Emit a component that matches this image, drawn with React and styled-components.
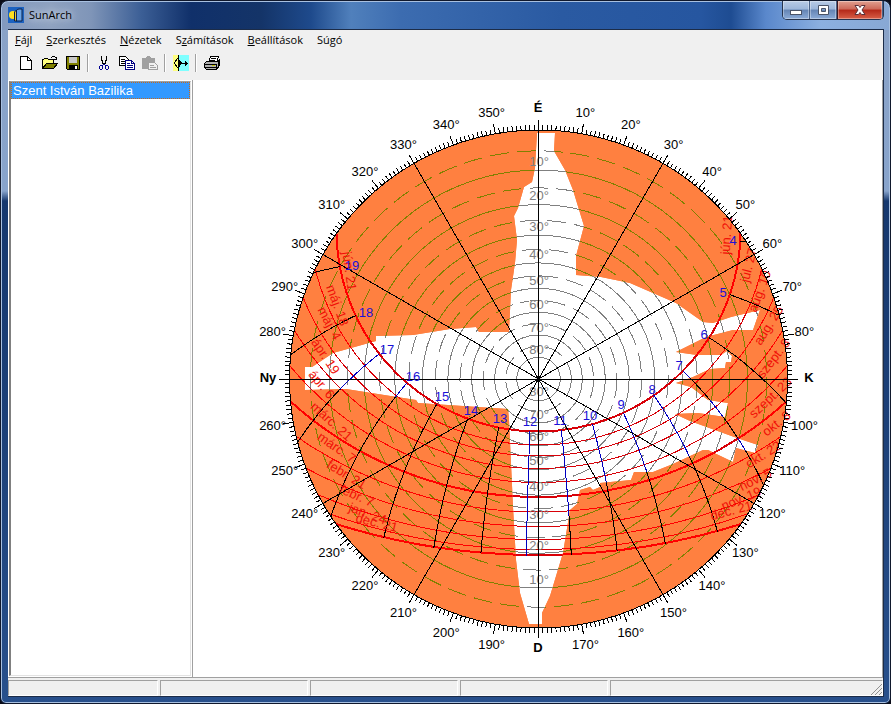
import React from "react";
import styled, {createGlobalStyle} from "styled-components";

const CX = 538.5;
const CY = 379;
const R = 249;
const LAT = 47.2;
const RAD = Math.PI / 180;

const menus = [
	["", "F", "ájl"],
	["", "S", "zerkesztés"],
	["", "N", "ézetek"],
	["S", "z", "ámítások"],
	["", "B", "eállítások"],
	["Sú", "g", "ó"],
];

// noon height of every sun path, measured down the meridian
const paths = [
	{noon: 431.5, bold: true},
	{noon: 445},
	{noon: 456},
	{noon: 468.5},
	{noon: 482.5},
	{noon: 497, bold: true},
	{noon: 512},
	{noon: 526.5},
	{noon: 539.5},
	{noon: 549.5},
	{noon: 555, bold: true},
];

const hourLabels = [
	[4, 733, 240], [5, 723, 292], [6, 704, 334], [7, 679, 365],
	[8, 652, 389], [9, 621, 404], [10, 590, 415], [11, 560, 420],
	[12, 530, 421], [13, 500, 418], [14, 471, 410], [15, 442, 396],
	[16, 413, 376], [17, 387, 349], [18, 366, 312], [19, 352, 265],
];

const dateLabels = [
	["jún. 21", 350, 271, 82], ["máj. 18", 338, 305, 70],
	["máj. 4", 330, 323, 62], ["ápr. 19", 326, 356, 56],
	["ápr. 6", 322, 384, 50], ["márc. 21", 332, 421, 42],
	["márc. 7", 337, 447, 35], ["febr. 21", 347, 474, 31],
	["febr. 7", 357, 495, 25], ["jan. 24", 368, 513, 20],
	["dec. 21", 377, 522, 14], ["jún. 21", 726, 235, -86],
	["júl. 27", 748, 265, -76], ["aug. 10", 759, 291, -70],
	["aug. 25", 768, 325, -58], ["szept. 8", 773, 358, -52],
	["szept. 23", 770, 397, -43], ["okt. 8", 776, 423, -38],
	["okt. 22", 763, 454, -32], ["nov. 5", 755, 479, -27],
	["nov. 19", 741, 498, -22], ["dec. 21", 731, 510, -15],
];

const heightLabels = [
	[10, 161], [20, 195], [30, 226], [40, 254], [50, 280], [60, 304], [70, 327], [80, 349],
	[80, 391], [70, 414], [60, 436], [50, 460], [40, 486], [30, 514], [20, 545], [10, 579],
];

const openSky =
	"537,133 535,168 532,182 524,187 518,208 514,216 517,240 515,263 511,290 509,332 479,332 476,327 " +
	"450,329 413,335 376,336 376,341 333,353 312,367 305,367 305,390 346,389 416,400 418,403 508,409 " +
	"509,420 513,507 516,560 520,593 529,624 542,624 542,613 550,596 563,553 570,510 577,504 580,490 " +
	"590,487 593,490 600,487 600,483 631,480 634,472 653,472 673,464 703,450 708,450 733,462 736,448 " +
	"755,453 758,445 737,438 690,421 675,414 698,413 725,417 728,403 708,400 691,387 676,383 693,377 " +
	"710,369 725,368 726,362 731,362 732,356 727,351 721,355 697,355 676,352 706,337 733,330 753,330 " +
	"760,310 731,317 713,323 703,322 676,303 630,283 601,277 576,275 576,256 584,226 573,190 565,170 " +
	"554,151 555,133";

const range = (from, to, step = 1) => {
	const list = [];
	for (let i = from; i <= to; i += step) list.push(i);
	return list;
};

const polar = (deg, r) => [CX + r * Math.sin(deg * RAD), CY - r * Math.cos(deg * RAD)];

const declination = (noon) => LAT - (2 * Math.atan((noon - CY) / R)) / RAD;

// point of the sky for an hour and a declination, null when the sun is down
const sunPoint = (hour, dec) => {
	const h = (15 * (hour - 12) + 4.1) * RAD;
	const d = dec * RAD;
	const f = LAT * RAD;
	const up = Math.sin(f) * Math.sin(d) + Math.cos(f) * Math.cos(d) * Math.cos(h);
	if (up < 0) return null;
	const west = Math.cos(d) * Math.sin(h);
	const south = Math.sin(f) * Math.cos(d) * Math.cos(h) - Math.cos(f) * Math.sin(d);
	return [CX - (R * west) / (1 + up), CY + (R * south) / (1 + up)];
};

const hourLine = (hour) =>
	range(0, 188)
		.map((i) => sunPoint(hour, 23.4 - i / 4))
		.filter(Boolean)
		.map((p) => p.map((v) => v.toFixed(1)).join(","))
		.join(" ");

const Rings = ({color}) => (
	<g fill="none" stroke={color} shapeRendering="crispEdges">
		{range(5, 80, 5).map((h) => (
			<circle
				key={h}
				cx={CX}
				cy={CY}
				r={R * Math.tan(((90 - h) / 2) * RAD)}
				strokeDasharray={h % 10 ? "19 8" : undefined}
			/>
		))}
	</g>
);

const Hours = ({color}) => (
	<g fill="none" stroke={color} shapeRendering="crispEdges">
		{range(4, 19).map((h) => (
			<polyline key={h} points={hourLine(h)} />
		))}
	</g>
);

const SunPaths = ({color}) => (
	<g fill="none" stroke={color} shapeRendering="crispEdges">
		{paths.map(({noon, bold}) => {
			const near = noon - CY;
			const far = R * Math.tan(((180 - LAT - declination(noon)) / 2) * RAD);
			return (
				<circle
					key={noon}
					cx={CX}
					cy={CY - (far - near) / 2}
					r={(far + near) / 2}
					strokeWidth={bold ? 2 : 1}
				/>
			);
		})}
	</g>
);

const Dates = ({color}) => (
	<g fill={color}>
		{dateLabels.map(([text, x, y, turn]) => (
			<ChartText key={text + x} transform={`translate(${x} ${y}) rotate(${turn})`} y="5">
				{text}
			</ChartText>
		))}
	</g>
);

const SunChart = () => (
	<Chart viewBox="193 80 689 597" role="img" aria-label="Szent István Bazilika">
		<defs>
			<clipPath id="dome">
				<circle cx={CX} cy={CY} r={R} />
			</clipPath>
			<clipPath id="sky">
				<polygon points={openSky} />
			</clipPath>
		</defs>
		<circle cx={CX} cy={CY} r={R} fill="#ff8040" />
		<Rings color="#808000" />
		<g clipPath="url(#dome)">
			<SunPaths color="#ff0000" />
			<Hours color="#000000" />
		</g>
		<g clipPath="url(#sky)">
			<polygon points={openSky} fill="#ffffff" />
			<Rings color="#808080" />
			<SunPaths color="#d80008" />
			<Hours color="#0000c0" />
		</g>
		<g fill="#808080">
			{heightLabels.map(([h, y]) => (
				<ChartText key={y} x="539" y={y + 5}>{h}°</ChartText>
			))}
		</g>
		<Dates color="#f01008" />
		<g stroke="#000000" shapeRendering="crispEdges">
			<circle cx={CX} cy={CY} r={R} fill="none" />
			{range(0, 359).map((a) => {
				const [x1, y1] = polar(a, a % 30 ? R : 0);
				const [x2, y2] = polar(a, a % 10 ? R + 5 : R + 10);
				return a % 90 ? <line key={a} x1={x1} y1={y1} x2={x2} y2={y2} /> : null;
			})}
			<line x1="538.5" y1="120" x2="538.5" y2="638" />
			<line x1="279" y1="379.5" x2="798" y2="379.5" />
		</g>
		<circle cx="538.5" cy="379.5" r="2" />
		<g fill="#000000">
			{range(10, 350, 10).filter((a) => a % 90).map((a) => {
				const [x, y] = polar(a, 270);
				return <ChartText key={a} x={x} y={y + 4}>{a}°</ChartText>;
			})}
			<ChartText $bold x="538" y="112">É</ChartText>
			<ChartText $bold x="809" y="382">K</ChartText>
			<ChartText $bold x="538" y="652">D</ChartText>
			<ChartText $bold x="268" y="382">Ny</ChartText>
		</g>
		<g fill="#1a10d8">
			{hourLabels.map(([h, x, y]) => (
				<ChartText key={h} x={x} y={y + 5}>{h}</ChartText>
			))}
		</g>
	</Chart>
);

const Icon = ({children}) => (
	<svg width="16" height="16" viewBox="0 0 16 16" shapeRendering="crispEdges" aria-hidden="true">
		{children}
	</svg>
);

const NewIcon = () => (
	<Icon>
		<path d="M1.5 1.5h7l4 4v9h-11z" fill="#fff" stroke="#000" />
		<path d="M8.5 1.5v4h4" fill="none" stroke="#000" />
	</Icon>
);

const OpenIcon = () => (
	<Icon>
		<path d="M0.5 13.5v-9h1l1-1h3l1 1h5v4" fill="#ffff80" stroke="#000" />
		<path d="M0.5 13.5l4-5h11l-4 5z" fill="#808000" stroke="#000" />
		<path d="M9 2.5h1M10 1.5h3M13 2.5h1M12 4.5h3M14.5 2v3" stroke="#000" />
	</Icon>
);

const SaveIcon = () => (
	<Icon>
		<path d="M1.5 1.5h13v13h-12l-1-1z" fill="#808000" stroke="#000" />
		<path d="M4 2h8v6h-8z" fill="#c8c8c8" />
		<path d="M4 10h9v4h-9z" fill="#000" />
		<path d="M10 11h2v3h-2z" fill="#fff" />
	</Icon>
);

const CutIcon = () => (
	<Icon>
		<path d="M5.5 1v4l1 1v2l1 1M10.5 1v4l-1 1v2l-1 1" stroke="#000" fill="none" />
		<path d="M7.5 9.5l-1 1h-2l-1 1v2l1 1h1l1-1v-3M8.5 9.5l1 1h2l1 1v2l-1 1h-1l-1-1v-3" stroke="#000090" fill="none" />
	</Icon>
);

const CopyIcon = () => (
	<Icon>
		<path d="M0.5 1.5h6l3 3v6h-9z" fill="#fff" stroke="#000" />
		<path d="M2 4.5h4M2 6.5h5M2 8.5h5" stroke="#000" />
		<path d="M6.5 5.5h6l3 3v6h-9z" fill="#fff" stroke="#000080" />
		<path d="M12.5 5.5v3h3M8 8.5h3M8 10.5h6M8 12.5h6" stroke="#000080" fill="none" />
	</Icon>
);

const PasteIcon = () => (
	<Icon>
		<path d="M0 3h4l1-2h3l1 2h4v11h-13z" fill="#a0a0a0" />
		<path d="M6.5 7.5h6l3 3v4h-9z" fill="#f0f0f0" stroke="#a0a0a0" />
		<path d="M8 10.5h4M8 12.5h6" stroke="#a0a0a0" />
	</Icon>
);

const SectionIcon = () => (
	<Icon>
		<path d="M0 0h6v16H0z" fill="#ffff80" />
		<path d="M6 0h10v16H6z" fill="#80ffff" />
		<path d="M5.5 0v16" stroke="#000" />
		<path d="M5 3l-4 5 4 5" fill="none" stroke="#000" />
		<path d="M6 4l3 4-3 5z" fill="#000" />
		<path d="M9 8.5h6M12.5 6v5M13.5 7v3" stroke="#000" />
	</Icon>
);

const PrintIcon = () => (
	<Icon>
		<path d="M4.5 7.5l2-6h8l-2 6z" fill="#fff" stroke="#000" />
		<path d="M7 3.5h5M6 5.5h5" stroke="#000" />
		<path d="M0.5 8.5l2-2h11l2-2v6l-3 4h-10l-2-2z" fill="#b0b0b0" stroke="#000" />
		<path d="M1 9.5h12M1 12.5h12M12.5 9v5M14.5 6v6" stroke="#000" />
		<path d="M8 10.5h3" stroke="#c0c000" />
	</Icon>
);

const AppIcon = () => (
	<Icon>
		<path d="M0 0h16v16H0z" fill="#1c62c0" />
		<circle cx="5" cy="8" r="4" fill="#ffe020" shapeRendering="auto" />
		<path d="M8 14V4q1-2 3-2h3v12z" fill="#6ca4e4" stroke="#08204c" shapeRendering="auto" />
		<path d="M6.5 14V5l2-2v11z" fill="#e8c830" stroke="#08204c" shapeRendering="auto" />
	</Icon>
);

const tools = [
	["Új", NewIcon],
	["Megnyitás", OpenIcon],
	["Mentés", SaveIcon],
	null,
	["Kivágás", CutIcon],
	["Másolás", CopyIcon],
	["Beillesztés", PasteIcon],
	null,
	["Metszet", SectionIcon],
	null,
	["Nyomtatás", PrintIcon],
];

const App = () => {
	return (
		<>
			<GlobalStyle />
			<Frame>
				<TitleBar>
					<AppIcon />
					<Title>SunArch</Title>
					<WindowButtons>
						<WindowButton aria-label="Kis méret">
							<svg width="14" height="12" aria-hidden="true">
								<rect x="1.5" y="6.5" width="11" height="4" fill="#fff" stroke="#4a5468" />
							</svg>
						</WindowButton>
						<WindowButton aria-label="Teljes méret">
							<svg width="13" height="12" aria-hidden="true">
								<path d="M1.5 1.5h10v9h-10zM4.5 4.5v3h4v-3z" fill="#fff" fillRule="evenodd" stroke="#4a5468" />
							</svg>
						</WindowButton>
						<WindowButton $close aria-label="Bezárás">
							<svg width="12" height="12" aria-hidden="true">
								<path d="M1 1.5h3.500L6 3.500l1.500-2H11L8 6l3 4.500H7.500L6 8.500l-1.500 2H1L4 6z" fill="#fff" stroke="#5a3038" />
							</svg>
						</WindowButton>
					</WindowButtons>
				</TitleBar>
				<Client>
					<MenuBar>
						{menus.map(([before, key, after]) => (
							<MenuItem key={after}>
								{before}<u>{key}</u>{after}
							</MenuItem>
						))}
					</MenuBar>
					<Toolbar>
						{tools.map((tool, i) => {
							if (!tool) return <Separator key={i} />;
							const [label, Glyph] = tool;
							return (
								<Tool key={i} aria-label={label}>
									<Glyph />
								</Tool>
							);
						})}
					</Toolbar>
					<Body>
						<Side>
							<List>
								<ListItem>Szent István Bazilika</ListItem>
							</List>
						</Side>
						<SunChart />
					</Body>
					<StatusBar>
						<StatusCell />
						<StatusCell />
						<StatusCell />
						<StatusCell />
						<StatusCell $grow>
							<svg width="12" height="12" aria-hidden="true">
								<path d="M1 12L12 1M5 12l7-7M9 12l3-3" stroke="#909090" />
							</svg>
						</StatusCell>
					</StatusBar>
				</Client>
			</Frame>
		</>
	);
};

export default App;

const GlobalStyle = createGlobalStyle`
	* {
		box-sizing: border-box;
	}
	body {
		margin: 0;
		background: #0a0c18;
	}
	button {
		font: inherit;
		color: inherit;
		border: 0;
		padding: 0;
		background: none;
	}
`;

const Frame = styled.div`
	display: flex;
	flex-direction: column;
	height: 100vh;
	padding: 0 6px 6px 7px;
	border: 1px solid #10182c;
	border-radius: 8px 8px 6px 6px;
	box-shadow: inset 0 0 0 1px #a8c0e0;
	background:
		linear-gradient(90deg, #8299bf 0, #8fa2c0 50px, #7f95b8 90px, #3c5f96 140px, #10306a 190px, #143468 260px, #1e4a8c 310px, #5080bc 350px, #3c6cb0 400px, #2a5aa2 560px, #2656a0 700px, #1e4c92 730px, #5a88cc 765px, #8cb0e0 820px, #88a8d4 100%) top / 100% 29px no-repeat,
		linear-gradient(#8aa2c6 0, #88a4cc 190px, #16386e 200px, #1c4078 60%, #28508c 100%);
	font-family: "Open Sans", "Noto Sans", sans-serif;
	font-size: 11px;
	color: #000;
`;

const TitleBar = styled.header`
	display: flex;
	align-items: center;
	flex: none;
	height: 28px;
`;

const Title = styled.h1`
	flex: 1;
	margin: 0 0 0 5px;
	font-size: 11px;
	font-weight: 400;
	line-height: 16px;
	text-shadow: 0 0 6px #d0dae8, 0 0 10px #d0dae8;
`;

const WindowButtons = styled.div`
	display: flex;
	align-self: flex-start;
	height: 19px;
	border: 1px solid #26344e;
	border-top: 0;
	border-radius: 0 0 5px 5px;
	overflow: hidden;
`;

const WindowButton = styled.button`
	display: flex;
	align-items: center;
	justify-content: center;
	width: ${(props) => (props.$close ? "46px" : "27px")};
	border-left: ${(props) => (props.$close ? "1px solid #401820" : "0")};
	border-right: 1px solid #4a6288;
	box-shadow: inset 0 0 0 1px rgba(255, 255, 255, 0.35);
	background: ${(props) =>
		props.$close
			? "linear-gradient(#e0a090 0, #cc6858 45%, #b42818 50%, #d86048 100%)"
			: "linear-gradient(#b8cbe6 0, #9cb6da 45%, #6484b4 50%, #8cacd8 100%)"};
`;

const Client = styled.main`
	display: flex;
	flex-direction: column;
	flex: 1;
	min-height: 0;
	border: 1px solid #1c2c48;
	border-left: 0;
	background: #f0f0f0;
`;

const MenuBar = styled.nav`
	display: flex;
	align-items: center;
	flex: none;
	height: 20px;
`;

const MenuItem = styled.button`
	padding: 0 7px;
	line-height: 20px;
`;

const Toolbar = styled.div`
	display: flex;
	align-items: center;
	flex: none;
	height: 30px;
	padding: 0 7px 4px;
`;

const Tool = styled.button`
	display: flex;
	align-items: center;
	justify-content: center;
	width: 23px;
	height: 22px;
`;

const Separator = styled.div`
	width: 2px;
	height: 18px;
	margin: 0 3px;
	border-left: 1px solid #a0a0a0;
	border-right: 1px solid #fff;
`;

const Body = styled.div`
	display: flex;
	flex: 1;
	min-height: 0;
	border-right: 1px solid #a0a0a0;
	border-bottom: 1px solid #a0a0a0;
	background: #fff;
`;

const Side = styled.aside`
	flex: none;
	width: 185px;
	padding: 1px;
	border-right: 1px solid #a0a0a0;
`;

const List = styled.ul`
	height: 100%;
	margin: 0;
	padding: 0;
	border: 1px solid #e3e3e3;
	border-top-color: #a0a0a0;
	border-left: 2px solid #808080;
	list-style: none;
`;

const ListItem = styled.li`
	height: 17px;
	padding-left: 1px;
	border: 1px dotted #c86818;
	background: #3399ff;
	color: #fff;
	font: 13px/16px "Liberation Sans", sans-serif;
`;

const Chart = styled.svg`
	flex: 1;
	min-width: 0;
	width: 100%;
	height: 100%;
`;

const ChartText = styled.text`
	font-family: "Liberation Sans", sans-serif;
	font-size: 13px;
	font-weight: ${(props) => (props.$bold ? 700 : 400)};
	text-anchor: middle;
`;

const StatusBar = styled.footer`
	display: flex;
	flex: none;
	gap: 2px;
	height: 18px;
	padding-top: 2px;
`;

const StatusCell = styled.div`
	display: flex;
	flex: ${(props) => (props.$grow ? "1" : "0 0 148px")};
	align-items: flex-end;
	justify-content: flex-end;
	border: 1px solid #fff;
	border-top-color: #a0a0a0;
	border-left-color: #a0a0a0;

	&:first-child {
		flex-basis: 150px;
	}
`;
